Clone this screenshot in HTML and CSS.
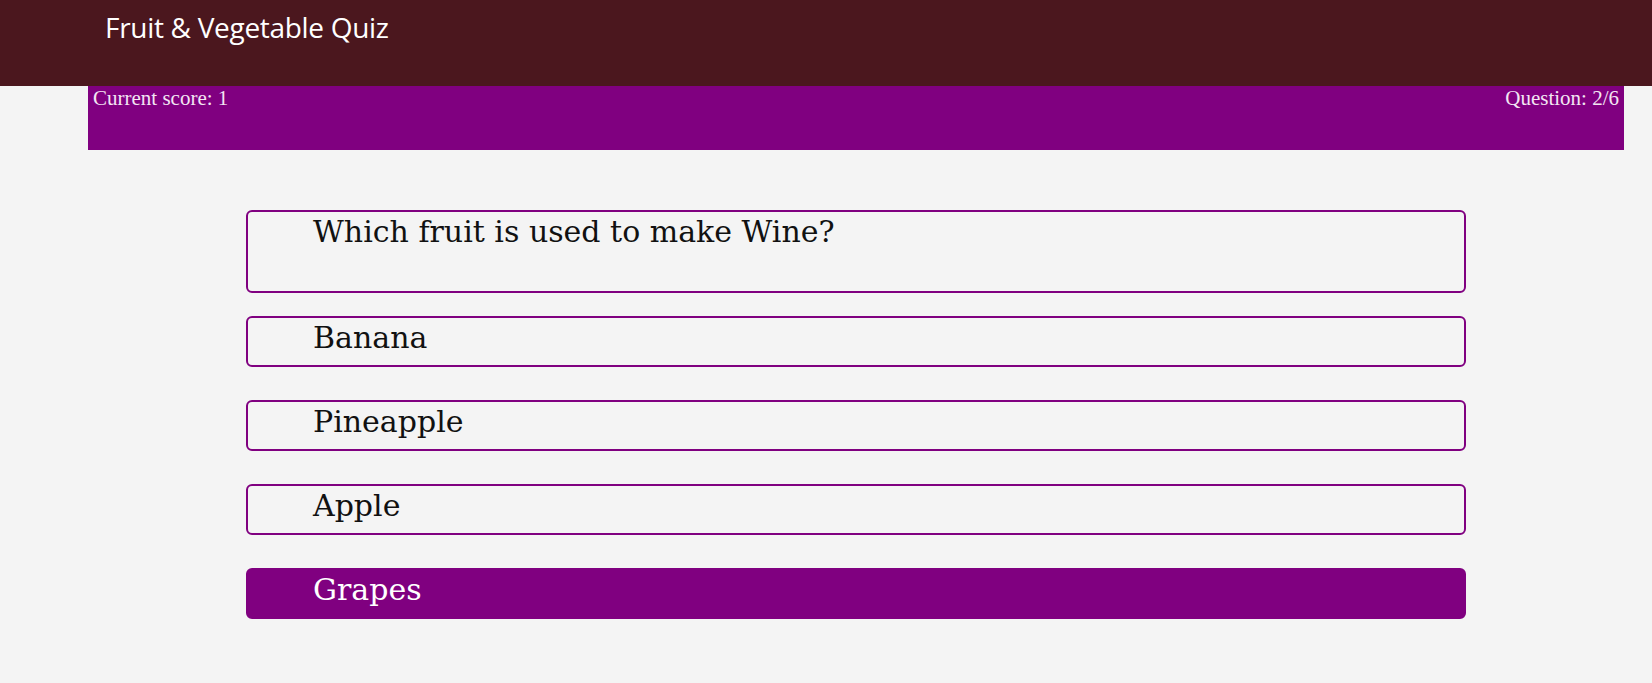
FILE: index.html
```html
<!DOCTYPE html>
<html lang="en">
<head>
<meta charset="utf-8">
<title>Fruit &amp; Vegetable Quiz</title>
<link rel="stylesheet" href="styles.css">
</head>
<body>
<header class="site-header">
  <h1 class="site-title">Fruit &amp; Vegetable Quiz</h1>
</header>
<main class="quiz">
  <div class="status-bar">
    <span class="score">Current score: 1</span>
    <span class="progress">Question: 2/6</span>
  </div>
  <div class="cards">
    <div class="card question">Which fruit is used to make Wine?</div>
    <div class="card answer">Banana</div>
    <div class="card answer">Pineapple</div>
    <div class="card answer">Apple</div>
    <div class="card answer selected">Grapes</div>
  </div>
</main>
</body>
</html>
```
FILE: styles.css
```css
html, body {
  margin: 0;
  padding: 0;
  background: #f4f4f4;
}
body {
  font-family: "Liberation Serif", serif;
}
.site-header {
  background: #4b171e;
  height: 86px;
  box-sizing: border-box;
  padding-left: 105px;
}
.site-title {
  margin: 0;
  padding-top: 9px;
  font-family: "Open Sans", sans-serif;
  font-weight: 400;
  font-size: 28px;
  line-height: 36px;
  color: #ffffff;
  letter-spacing: -0.3px;
}
.quiz {
  margin-left: 88px;
  width: 1536px;
}
.status-bar {
  background: #800080;
  height: 64px;
  display: flex;
  justify-content: space-between;
  align-items: flex-start;
  padding: 0 5px;
  box-sizing: border-box;
  color: #f3e6f3;
  font-family: "Liberation Serif", serif;
  font-size: 21px;
  line-height: 25px;
}
.cards {
  width: 1220px;
  margin: 60px auto 0;
  display: flex;
  flex-direction: column;
}
.card {
  box-sizing: border-box;
  border: 2px solid #800080;
  border-radius: 6px;
  padding-left: 65px;
  font-family: "DejaVu Serif", serif;
  font-size: 30px;
  line-height: 39px;
  color: #111111;
  height: 51px;
  margin-bottom: 33px;
}
.question {
  height: 83px;
  margin-bottom: 23px;
}
.selected {
  background: #800080;
  border-color: #800080;
  color: #ffffff;
}
```
